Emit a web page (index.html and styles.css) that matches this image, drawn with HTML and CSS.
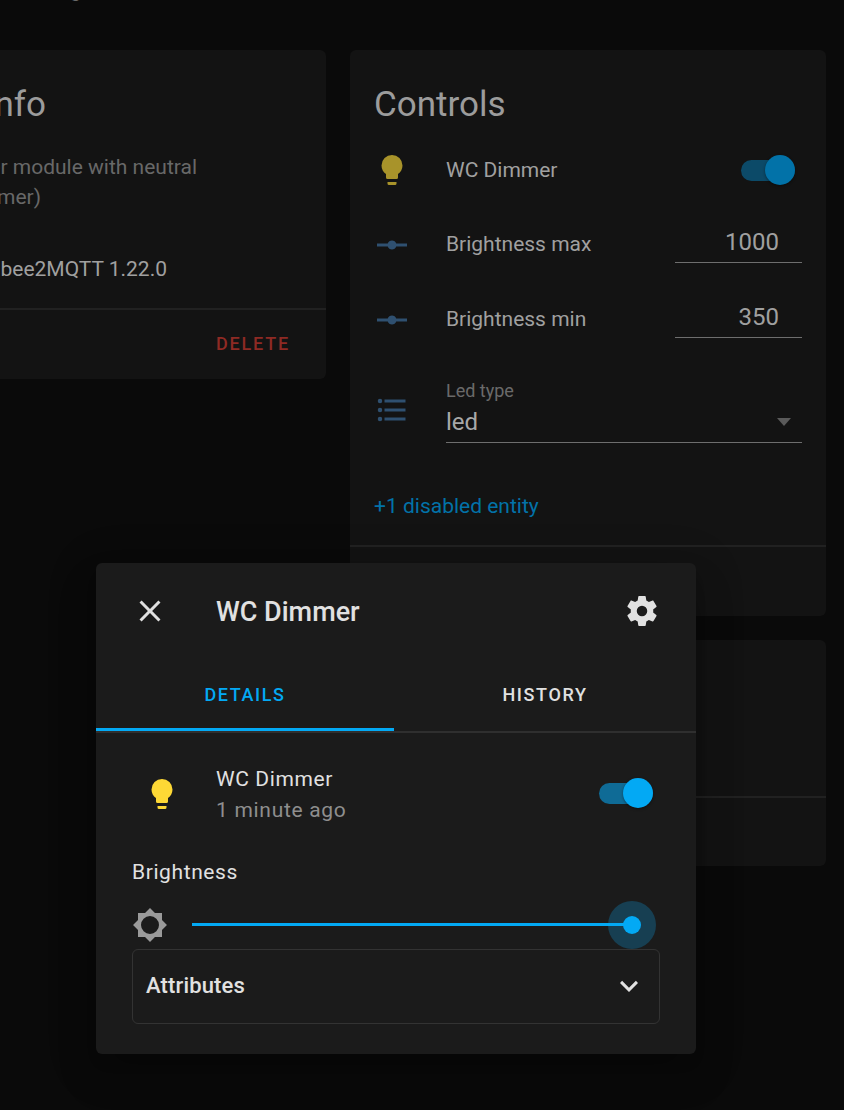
FILE: index.html
```html
<!DOCTYPE html>
<html lang="en">
<head>
<meta charset="utf-8">
<title>WC Dimmer</title>
<link rel="stylesheet" href="styles.css">
</head>
<body>
<div class="topbar"><span class="topbar-text">g</span></div>
<main class="columns">
  <section class="card card-info">
    <h2 class="card-title info-title">Device info</h2>
    <div class="info-body">
      <div class="info-line line-a">Zigbee dimmer module with neutral</div>
      <div class="info-line line-b">(Smart dimmer)</div>
      <div class="info-line line-c">by Zigbee2MQTT 1.22.0</div>
    </div>
    <div class="card-actions"><span class="delete">DELETE</span></div>
  </section>
  <div class="stack">
    <section class="card card-controls">
      <h2 class="card-title">Controls</h2>
      <div class="row row-toggle">
        <svg class="icon bulb-dim" viewBox="0 0 24 24"><path d="M12,2A7,7 0 0,0 5,9C5,11.38 6.19,13.47 8,14.74V17A1,1 0 0,0 9,18H15A1,1 0 0,0 16,17V14.74C17.81,13.47 19,11.38 19,9A7,7 0 0,0 12,2M9,21A1,1 0 0,0 10,22H14A1,1 0 0,0 15,21V20H9V21Z"/></svg>
        <span class="row-label">WC Dimmer</span>
        <span class="switch switch-dim"><span class="switch-thumb"></span></span>
      </div>
      <div class="row row-input">
        <svg class="icon blue-dim icon-low" viewBox="0 0 24 24"><path d="M2,11H9.17C9.58,9.83 10.69,9 12,9C13.31,9 14.42,9.83 14.83,11H22V13H14.83C14.42,14.17 13.31,15 12,15C10.69,15 9.58,14.17 9.17,13H2V11Z"/></svg>
        <span class="row-label">Brightness max</span>
        <span class="field">1000</span>
      </div>
      <div class="row row-input">
        <svg class="icon blue-dim icon-low" viewBox="0 0 24 24"><path d="M2,11H9.17C9.58,9.83 10.69,9 12,9C13.31,9 14.42,9.83 14.83,11H22V13H14.83C14.42,14.17 13.31,15 12,15C10.69,15 9.58,14.17 9.17,13H2V11Z"/></svg>
        <span class="row-label">Brightness min</span>
        <span class="field">350</span>
      </div>
      <div class="row row-select">
        <svg class="icon blue-dim" viewBox="0 0 24 24"><path d="M7,5H21V7H7V5M7,13V11H21V13H7M4,4.5A1.5,1.5 0 0,1 5.5,6A1.5,1.5 0 0,1 4,7.5A1.5,1.5 0 0,1 2.5,6A1.5,1.5 0 0,1 4,4.5M4,10.5A1.5,1.5 0 0,1 5.5,12A1.5,1.5 0 0,1 4,13.5A1.5,1.5 0 0,1 2.5,12A1.5,1.5 0 0,1 4,10.5M7,19V17H21V19H7M4,16.5A1.5,1.5 0 0,1 5.5,18A1.5,1.5 0 0,1 4,19.5A1.5,1.5 0 0,1 2.5,18A1.5,1.5 0 0,1 4,16.5Z"/></svg>
        <div class="select">
          <span class="select-label">Led type</span>
          <div class="select-value"><span>led</span><span class="select-arrow"></span></div>
        </div>
      </div>
      <div class="disabled-link">+1 disabled entity</div>
      <div class="card-actions actions-controls"></div>
    </section>
    <section class="card card-extra">
      <div class="extra-body"></div>
      <div class="card-actions actions-extra"></div>
    </section>
  </div>
</main>

<aside class="dialog">
  <header class="dialog-head">
    <svg class="icon light" viewBox="0 0 24 24"><path d="M19,6.41L17.59,5L12,10.59L6.41,5L5,6.41L10.59,12L5,17.59L6.41,19L12,13.41L17.59,19L19,17.59L13.41,12L19,6.41Z"/></svg>
    <h1 class="dialog-title">WC Dimmer</h1>
    <svg class="icon light" viewBox="0 0 24 24"><path d="M12,15.5A3.5,3.5 0 0,1 8.5,12A3.5,3.5 0 0,1 12,8.5A3.5,3.5 0 0,1 15.5,12A3.5,3.5 0 0,1 12,15.5M19.43,12.97C19.47,12.65 19.5,12.33 19.5,12C19.5,11.67 19.47,11.34 19.43,11L21.54,9.37C21.73,9.22 21.78,8.95 21.66,8.73L19.66,5.27C19.54,5.05 19.27,4.96 19.05,5.05L16.56,6.05C16.04,5.66 15.5,5.32 14.87,5.07L14.5,2.42C14.46,2.18 14.25,2 14,2H10C9.75,2 9.54,2.18 9.5,2.42L9.13,5.07C8.5,5.32 7.96,5.66 7.44,6.05L4.95,5.05C4.73,4.96 4.46,5.05 4.34,5.27L2.34,8.73C2.21,8.95 2.27,9.22 2.46,9.37L4.57,11C4.53,11.34 4.5,11.67 4.5,12C4.5,12.33 4.53,12.65 4.57,12.97L2.46,14.63C2.27,14.78 2.21,15.05 2.34,15.27L4.34,18.73C4.46,18.95 4.73,19.03 4.95,18.95L7.44,17.94C7.96,18.34 8.5,18.68 9.13,18.93L9.5,21.58C9.54,21.82 9.75,22 10,22H14C14.25,22 14.46,21.82 14.5,21.58L14.87,18.93C15.5,18.67 16.04,18.34 16.56,17.94L19.05,18.95C19.27,19.03 19.54,18.95 19.66,18.73L21.66,15.27C21.78,15.05 21.73,14.78 21.54,14.63L19.43,12.97Z"/></svg>
  </header>
  <nav class="tabs">
    <span class="tab tab-active">DETAILS</span>
    <span class="tab">HISTORY</span>
  </nav>
  <div class="dialog-body">
    <div class="state-row">
      <svg class="icon bulb-on" viewBox="0 0 24 24"><path d="M12,2A7,7 0 0,0 5,9C5,11.38 6.19,13.47 8,14.74V17A1,1 0 0,0 9,18H15A1,1 0 0,0 16,17V14.74C17.81,13.47 19,11.38 19,9A7,7 0 0,0 12,2M9,21A1,1 0 0,0 10,22H14A1,1 0 0,0 15,21V20H9V21Z"/></svg>
      <div class="state-text">
        <div class="state-name">WC Dimmer</div>
        <div class="state-time">1 minute ago</div>
      </div>
      <span class="switch switch-on"><span class="switch-thumb"></span></span>
    </div>
    <div class="slider-label">Brightness</div>
    <div class="slider-row">
      <svg class="icon grey" viewBox="0 0 24 24"><path fill-rule="evenodd" d="M20,15.31L23.31,12L20,8.69V4H15.31L12,0.69L8.69,4H4V8.69L0.69,12L4,15.31V20H8.69L12,23.31L15.31,20H20V15.31ZM12,18A6,6 0 1,1 12,6A6,6 0 1,1 12,18Z"/></svg>
      <div class="slider">
        <span class="slider-halo"><span class="slider-thumb"></span></span>
        <span class="slider-track"></span>
      </div>
    </div>
    <div class="attributes">
      <span class="attributes-title">Attributes</span>
      <svg class="icon light" viewBox="0 0 24 24"><path d="M7.41,8.58L12,13.17L16.59,8.58L18,10L12,16L6,10L7.41,8.58Z"/></svg>
    </div>
  </div>
</aside>
</body>
</html>
```
FILE: styles.css
```css
* { box-sizing: border-box; }
html, body { margin: 0; height: 100%; }
body {
  width: 844px;
  height: 1110px;
  overflow: hidden;
  background: #0a0a0a;
  font-family: Roboto, "Liberation Sans", sans-serif;
  font-size: 21px;
  line-height: 30px;
  color: #a0a0a0;
}
h1, h2 { margin: 0; font-weight: 400; }

.topbar { height: 50px; overflow: hidden; }
.topbar-text {
  display: block;
  margin: -21px 0 0 70px;
  line-height: 22px;
  font-size: 20px;
  color: #6a6a6a;
}

.columns {
  display: grid;
  grid-template-columns: 476px 476px;
  column-gap: 24px;
  margin-left: -150px;
  align-items: start;
}
.stack { display: flex; flex-direction: column; gap: 24px; }
.card { background: #131313; border-radius: 6px; }
.card-title {
  font-size: 35px;
  line-height: 60px;
  height: 84px;
  padding: 25px 24px 0;
  color: #9c9c9c;
}
.card-actions { border-top: 2px solid #212121; }

/* Left card */
.card-info { height: 329px; display: flex; flex-direction: column; }
.info-title { width: 196px; text-align: right; padding: 25px 0 0; white-space: nowrap; }
.info-line { white-space: nowrap; text-align: right; }
.info-body { padding-top: 18px; height: 174px; }
.line-a { width: 347px; color: #686868; }
.line-b { width: 191px; color: #686868; }
.line-c { width: 317px; margin-top: 42px; color: #a0a0a0; }
.card-info .card-actions {
  flex: 1;
  display: flex;
  justify-content: flex-end;
  align-items: center;
  padding: 0 36px 1px 0;
}
.delete {
  font-size: 18px;
  font-weight: 500;
  letter-spacing: 1.8px;
  color: #8e2a24;
}

/* Right card rows */
.card-controls { height: 566px; display: flex; flex-direction: column; }
.row { display: flex; align-items: center; padding: 0 24px; }
.row-toggle { height: 72px; }
.row-input { height: 75px; }
.row-select { height: 68px; margin-top: 20px; }
.icon { width: 36px; height: 36px; flex: none; display: block; }
.icon-low { margin-top: 2px; }
.bulb-dim { fill: #a8932a; }
.blue-dim { fill: #2f5070; }
.light { fill: #e1e1e1; }
.bulb-on { fill: #fdd835; }
.grey { fill: #9a9a9a; }
.row-label { flex: 1; margin-left: 36px; }
.field {
  width: 127px;
  height: 39px;
  padding: 0 23px 2px 0;
  border-bottom: 1px solid #6e6e6e;
  font-size: 24px;
  line-height: 36px;
  text-align: right;
  color: #a0a0a0;
}
.select { flex: 1; margin-left: 36px; padding-top: 1px; }
.select-label { display: block; font-size: 18px; line-height: 24px; color: #6a6a6a; }
.select-value {
  display: flex;
  justify-content: space-between;
  align-items: center;
  height: 40px;
  padding: 0 10px 0 0;
  border-bottom: 1px solid #6e6e6e;
  font-size: 24px;
  line-height: 36px;
  color: #a8a8a8;
}
.select-arrow {
  width: 0;
  height: 0;
  margin-right: 1px;
  border-left: 7.5px solid transparent;
  border-right: 7.5px solid transparent;
  border-top: 8px solid #5a5a5a;
}
.disabled-link { margin: 47px 24px 0; color: #0272a8; }
.actions-controls { margin-top: 24px; flex: 1; }

.switch { position: relative; display: block; flex: none; height: 21px; width: 54px; border-radius: 11px; }
.switch-dim { background: #0c4a68; margin-right: 7px; }
.switch-on { background: #0f6b96; margin: 0 7px 2px 0; }
.switch-thumb {
  position: absolute;
  right: 0;
  top: -5px;
  width: 30px;
  height: 30px;
  border-radius: 50%;
  box-shadow: 0 1px 3px rgba(0,0,0,.4);
}
.switch-dim .switch-thumb { background: #0272a8; }
.switch-on .switch-thumb { background: #03a9f4; }

.card-extra { height: 226px; display: flex; flex-direction: column; }
.extra-body { height: 156px; }
.actions-extra { flex: 1; }

/* Dialog */
.dialog {
  position: absolute;
  left: 96px;
  top: 563px;
  width: 600px;
  height: 491px;
  background: #1b1b1b;
  border-radius: 6px;
  color: #e1e1e1;
  box-shadow: 0 11px 15px -7px rgba(0,0,0,.2), 0 24px 38px 3px rgba(0,0,0,.14), 0 9px 46px 8px rgba(0,0,0,.12);
}
.dialog-head {
  display: flex;
  align-items: center;
  height: 96px;
  padding: 0 36px;
}
.dialog-title {
  flex: 1;
  margin-left: 48px;
  font-size: 27px;
  font-weight: 500;
  line-height: 32px;
  padding-top: 1px;
  color: #e1e1e1;
}
.tabs { display: flex; height: 74px; border-bottom: 2px solid #2f2f2f; }
.tab {
  flex: 1;
  height: 72px;
  line-height: 72px;
  text-align: center;
  font-size: 18px;
  font-weight: 500;
  letter-spacing: 1.6px;
  color: #e1e1e1;
}
.tab-active {
  flex: none;
  width: 298px;
  color: #03a9f4;
  border-bottom: 3px solid #03a9f4;
}
.dialog-body { padding: 30px 36px 30px; }
.state-row { display: flex; align-items: center; padding-left: 12px; }
.state-text { flex: 1; margin-left: 36px; padding-top: 1px; }
.state-name { letter-spacing: .6px; }
.state-time { margin-top: 1px; letter-spacing: .7px; color: #8e8e8e; }
.slider-label { margin-top: 32px; letter-spacing: .6px; }
.slider-row { display: flex; align-items: center; height: 48px; margin-top: 14px; }
.slider { position: relative; flex: 1; height: 48px; margin: 0 4px 0 24px; display: flex; align-items: center; }
.slider-track {
  position: relative;
  display: block;
  width: calc(100% - 24px);
  height: 3px;
  margin-bottom: 1px;
  background: #03a9f4;
}
.slider-halo {
  position: absolute;
  right: 0;
  top: 0;
  width: 48px;
  height: 48px;
  border-radius: 50%;
  background: #173f52;
  display: flex;
  align-items: center;
  justify-content: center;
}
.slider-thumb { display: block; width: 18px; height: 18px; border-radius: 50%; background: #03a9f4; }
.attributes {
  display: flex;
  align-items: center;
  justify-content: space-between;
  height: 75px;
  padding: 0 12px 2px 13px;
  border: 1px solid #333;
  border-radius: 6px;
}
.attributes-title { font-size: 22px; font-weight: 500; letter-spacing: .15px; }
```
